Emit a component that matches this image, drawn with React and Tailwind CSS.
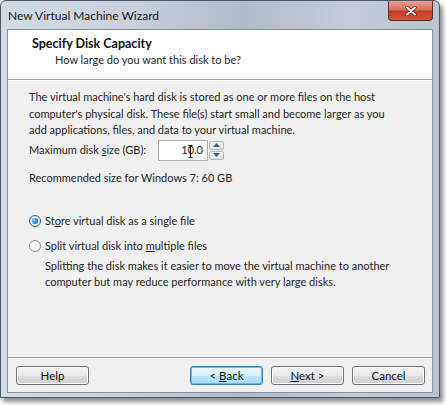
import React from 'react';

const Radio = ({ checked }) => (
  <span
    className={`relative inline-flex h-[12px] w-[12px] shrink-0 items-center justify-center rounded-full border ${
      checked ? 'border-[#2c628b] bg-[#deeefa]' : 'border-[#8e8f8f] bg-[#f4f4f4]'
    }`}
  >
    {checked && (
      <span className="h-[6px] w-[6px] rounded-full bg-[radial-gradient(circle_at_35%_35%,#8fd4ff,#1b6fb5_70%,#0d3f73)]" />
    )}
  </span>
);

const Btn = ({ children, focused }) => (
  <button
    className={`h-[19px] w-[73px] rounded-[3px] border text-[11.5px] leading-none text-[#111] ${
      focused
        ? 'border-[#3c7fb1] bg-[linear-gradient(#eaf6fd_0%,#d9f0fc_50%,#bee6fd_51%,#a7d9f5_100%)] shadow-[inset_0_0_0_1px_#48c6f5]'
        : 'border-[#707070] bg-[linear-gradient(#f2f2f2_0%,#ebebeb_50%,#dddddd_51%,#cfcfcf_100%)] shadow-[inset_0_0_0_1px_#fcfcfc]'
    }`}
  >
    {children}
  </button>
);

export default function App() {
  return (
    <div className="h-[405px] w-[446px] bg-white font-['Lato',sans-serif] text-[11px] text-[#1e1e1e]">
      <div className="flex h-[398px] w-[440px] flex-col rounded-t-[6px] border border-[#4d5866] bg-[linear-gradient(90deg,#d3dbe4_0%,#c8d1db_30%,#b0bcc9_55%,#c4cdd8_80%,#b9c4d0_100%)] shadow-[3px_4px_4px_rgba(0,0,0,0.45)]">
        <div className="flex h-[28px] items-start justify-between pl-[7px] pr-[6px]">
          <span className="mt-[6px] text-[12px] text-[#1a1a1a]">New Virtual Machine Wizard</span>
          <div className="flex h-[20px] w-[45px] items-center justify-center rounded-b-[4px] border border-t-0 border-[#6a2a22] bg-[linear-gradient(#e8a291_0%,#d4725e_45%,#c13b22_55%,#d0593f_100%)]">
            <svg width="12" height="10" viewBox="0 0 12 10">
              <path d="M2 1.5 L10 8.5 M10 1.5 L2 8.5" stroke="#3b1a14" strokeWidth="3.2" strokeLinecap="round" />
              <path d="M2 1.5 L10 8.5 M10 1.5 L2 8.5" stroke="#fff" strokeWidth="2" strokeLinecap="round" />
            </svg>
          </div>
        </div>
        <div className="mx-[6px] mb-[4px] flex flex-1 flex-col border border-[#84919f] bg-[#f0f0f0]">
          <div className="h-[50px] border-b border-[#a0a0a0] bg-white pl-[24px] pt-[6px] shadow-[0_1px_0_#fff]">
            <div className="text-[12.5px] font-bold leading-[16px] text-[#111]">Specify Disk Capacity</div>
            <div className="pl-[23px] leading-[16px]">How large do you want this disk to be?</div>
          </div>
          <div className="flex-1 pl-[21px] pr-[4px] pt-[9px]">
            <p className="whitespace-nowrap leading-[16.5px]">
              The virtual machine's hard disk is stored as one or more files on the host
              <br />
              computer's physical disk. These file(s) start small and become larger as you
              <br />
              add applications, files, and data to your virtual machine.
            </p>
            <div className="mt-[1px] flex items-center">
              <span className="w-[129px]">
                Maximum disk <span className="underline">s</span>ize (GB):
              </span>
              <div className="flex h-[21px] items-center">
                <div className="relative flex h-[21px] w-[50px] items-center justify-end border border-[#abadb3] bg-white pr-[4px]">
                  <span>10.0</span>
                  <svg className="absolute left-[29px] top-[4px]" width="5" height="13" viewBox="0 0 5 13">
                    <path d="M0.5 0.5 H4.5 M2.5 0.5 V12.5 M0.5 12.5 H4.5" stroke="#000" strokeWidth="1" fill="none" />
                  </svg>
                </div>
                <div className="ml-[1px] flex h-[19px] w-[15px] flex-col gap-[1px]">
                  <div className="flex flex-1 items-center justify-center rounded-[2px] border border-[#b5b8bd] bg-[linear-gradient(#f7f7f7,#e3e3e3)]">
                    <svg width="7" height="4" viewBox="0 0 7 4"><path d="M0 4 L3.5 0 L7 4Z" fill="#4a5a6e" /></svg>
                  </div>
                  <div className="flex flex-1 items-center justify-center rounded-[2px] border border-[#b5b8bd] bg-[linear-gradient(#f7f7f7,#e3e3e3)]">
                    <svg width="7" height="4" viewBox="0 0 7 4"><path d="M0 0 L3.5 4 L7 0Z" fill="#4a5a6e" /></svg>
                  </div>
                </div>
              </div>
            </div>
            <div className="mt-[9px]">Recommended size for Windows 7: 60 GB</div>
            <div className="mt-[27px] flex items-center gap-[4px]">
              <Radio checked />
              <span>
                St<span className="underline">o</span>re virtual disk as a single file
              </span>
            </div>
            <div className="mt-[8px] flex items-center gap-[4px]">
              <Radio />
              <span>
                Split virtual disk into <span className="underline">m</span>ultiple files
              </span>
            </div>
            <p className="mt-[4px] whitespace-nowrap pl-[16px] leading-[16px]">
              Splitting the disk makes it easier to move the virtual machine to another
              <br />
              computer but may reduce performance with very large disks.
            </p>
          </div>
          <div className="flex h-[35px] items-start border-t border-[#a0a0a0] pl-[8px] pr-[7px] pt-[8px] shadow-[inset_0_1px_0_#fff]">
            <Btn>Help</Btn>
            <div className="flex-1" />
            <div className="flex gap-[8px]">
              <Btn focused>
                &lt; <span className="underline">B</span>ack
              </Btn>
              <Btn>
                <span className="underline">N</span>ext &gt;
              </Btn>
              <Btn>Cancel</Btn>
            </div>
          </div>
        </div>
      </div>
    </div>
  );
}
